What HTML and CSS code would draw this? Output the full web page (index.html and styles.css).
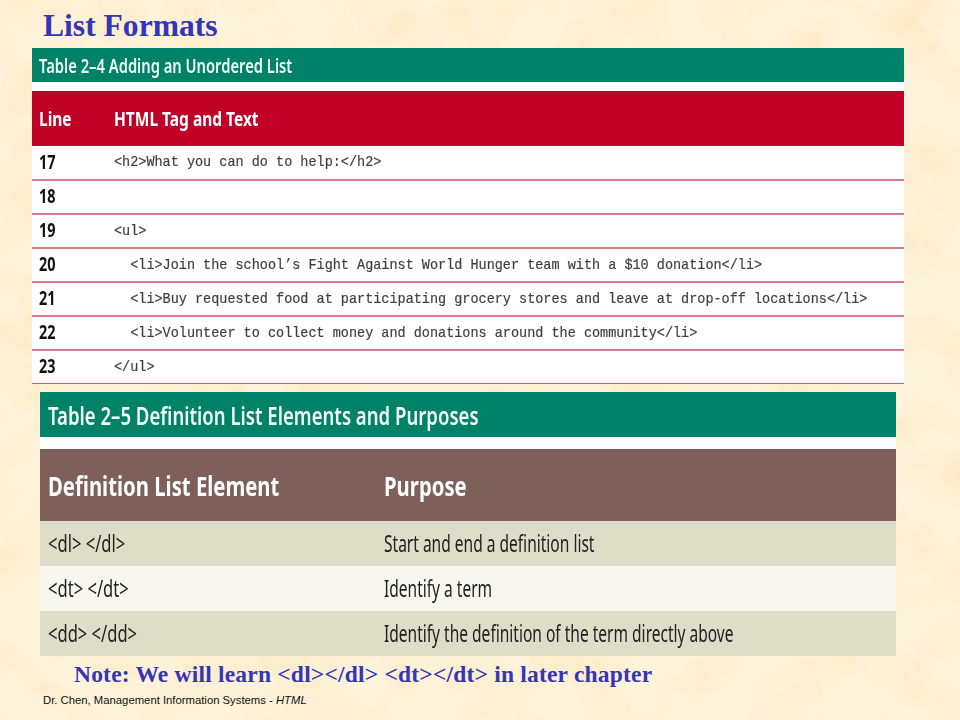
FILE: index.html
```html
<!DOCTYPE html>
<html lang="en">
<head>
<meta charset="utf-8">
<title>List Formats</title>
<link rel="stylesheet" href="styles.css">
</head>
<body>
<svg class="paper" width="960" height="720" aria-hidden="true">
  <filter id="mottle" x="0" y="0" width="100%" height="100%">
    <feTurbulence type="fractalNoise" baseFrequency="0.018 0.022" numOctaves="4" seed="7"/>
    <feColorMatrix type="matrix" values="0 0 0 0 0.96  0 0 0 0 0.80  0 0 0 0 0.50  1.5 0 0 0 -0.6"/>
  </filter>
  <rect width="960" height="720" fill="#fef3db"/>
  <rect width="960" height="720" filter="url(#mottle)"/>
</svg>
<main class="slide">
  <h1 class="title">List Formats</h1>

  <section class="code-table">
    <div class="caption caption-small"><span class="narrow n-cap-s">Table 2–4 Adding an Unordered List</span></div>
    <div class="gap gap-small"></div>
    <div class="code-head">
      <div class="num-col"><span class="narrow n-head-s">Line</span></div>
      <div><span class="narrow n-head-s">HTML Tag and Text</span></div>
    </div>
    <div class="code-row code-row-first"><div class="num-col"><span class="narrow n-num">17</span></div><code>&lt;h2&gt;What you can do to help:&lt;/h2&gt;</code></div>
    <div class="code-row"><div class="num-col"><span class="narrow n-num">18</span></div><code></code></div>
    <div class="code-row"><div class="num-col"><span class="narrow n-num">19</span></div><code>&lt;ul&gt;</code></div>
    <div class="code-row"><div class="num-col"><span class="narrow n-num">20</span></div><code>  &lt;li&gt;Join the school’s Fight Against World Hunger team with a $10 donation&lt;/li&gt;</code></div>
    <div class="code-row"><div class="num-col"><span class="narrow n-num">21</span></div><code>  &lt;li&gt;Buy requested food at participating grocery stores and leave at drop-off locations&lt;/li&gt;</code></div>
    <div class="code-row"><div class="num-col"><span class="narrow n-num">22</span></div><code>  &lt;li&gt;Volunteer to collect money and donations around the community&lt;/li&gt;</code></div>
    <div class="code-row code-row-last"><div class="num-col"><span class="narrow n-num">23</span></div><code>&lt;/ul&gt;</code></div>
  </section>

  <section class="def-table">
    <div class="caption caption-large"><span class="narrow n-cap-l">Table 2–5 Definition List Elements and Purposes</span></div>
    <div class="gap gap-large"></div>
    <div class="def-head">
      <div class="def-col"><span class="narrow n-head-l">Definition List Element</span></div>
      <div><span class="narrow n-head-l">Purpose</span></div>
    </div>
    <div class="def-row shaded"><div class="def-col"><span class="narrow n-tag">&lt;dl&gt; &lt;/dl&gt;</span></div><div><span class="narrow n-text">Start and end a definition list</span></div></div>
    <div class="def-row pale"><div class="def-col"><span class="narrow n-tag">&lt;dt&gt; &lt;/dt&gt;</span></div><div><span class="narrow n-text">Identify a term</span></div></div>
    <div class="def-row shaded"><div class="def-col"><span class="narrow n-tag">&lt;dd&gt; &lt;/dd&gt;</span></div><div><span class="narrow n-text">Identify the definition of the term directly above</span></div></div>
  </section>

  <p class="note">Note: We will learn &lt;dl&gt;&lt;/dl&gt; &lt;dt&gt;&lt;/dt&gt; in later chapter</p>
  <p class="footer">Dr. Chen, Management Information Systems - <em>HTML</em></p>
</main>
</body>
</html>
```
FILE: styles.css
```css
html, body {
  margin: 0;
  padding: 0;
}
body {
  width: 960px;
  height: 720px;
  overflow: hidden;
  background: #fef3db;
}
.paper {
  position: absolute;
  left: 0;
  top: 0;
}
.slide {
  position: relative;
  display: flex;
  flex-direction: column;
  width: 960px;
  height: 720px;
  box-sizing: border-box;
  padding-top: 8px;
}
.title {
  margin: 0 0 0 43px;
  height: 40px;
  font: bold 31.6px/36px "Liberation Serif", serif;
  color: #3535b8;
}
.narrow {
  display: inline-block;
  transform-origin: left center;
  white-space: nowrap;
}
.n-cap-s { transform: scaleX(0.737); }
.n-head-s { transform: scaleX(0.775); }
.n-num { transform: scaleX(0.76); }
.n-cap-l { transform: scaleX(0.714); }
.n-head-l { transform: scaleX(0.752); }
.n-tag { transform: scaleX(0.69); }
.n-text { transform: scaleX(0.647); }
.caption {
  background: #008269;
  color: #f2fbf6;
  display: flex;
  align-items: center;
  font-family: "Noto Sans", sans-serif;
  font-weight: 600;
}
.gap {
  background: #fff;
}
.code-table {
  margin: 0 56px 0 32px;
}
.caption-small {
  height: 34px;
  padding-left: 7px;
  font-size: 20px;
}
.gap-small {
  height: 9px;
}
.code-head {
  display: flex;
  align-items: center;
  height: 55px;
  padding-left: 7px;
  background: #c00026;
  color: #fff;
  font: bold 20px "Noto Sans", sans-serif;
}
.num-col {
  flex: 0 0 75px;
}
.code-row .num-col {
  padding-bottom: 2px;
}
.code-row {
  display: flex;
  align-items: center;
  box-sizing: border-box;
  height: 34px;
  padding-left: 7px;
  background: #fff;
  border-bottom: 2px solid #dd7a8c;
  color: #111;
  font: bold 19px "Noto Sans", sans-serif;
}
.code-row-first {
  height: 35px;
}
.code-row-last {
  height: 33px;
  border-bottom: 1px solid #d9566c;
}
code {
  font: 15px "Liberation Mono", monospace;
  color: #3e3e3e;
  -webkit-text-stroke: 0.2px #3e3e3e;
  white-space: pre;
  transform: scaleX(0.9);
  transform-origin: left center;
}
.def-table {
  margin: 8px 64px 0 40px;
}
.caption-large {
  height: 45px;
  padding-left: 8px;
  font-size: 26px;
}
.gap-large {
  height: 12px;
}
.def-head {
  display: flex;
  align-items: center;
  height: 72px;
  padding-left: 8px;
  background: #7e5f5a;
  color: #fff;
  font: bold 27px "Noto Sans", sans-serif;
}
.def-col {
  flex: 0 0 336px;
}
.def-row {
  display: flex;
  align-items: center;
  box-sizing: border-box;
  height: 45px;
  padding: 0 0 2px 8px;
  color: #222;
  font: 24px "Noto Sans", sans-serif;
}
.shaded {
  background: #deddc8;
}
.pale {
  background: #f7f7f0;
}
.note {
  margin: 5px 0 0 74px;
  font: bold 23.5px/27px "Liberation Serif", serif;
  letter-spacing: 0.2px;
  color: #3535b8;
}
.footer {
  margin: 5px 0 0 43px;
  font: 11.3px/14px "Liberation Sans", sans-serif;
  color: #111;
}
```
